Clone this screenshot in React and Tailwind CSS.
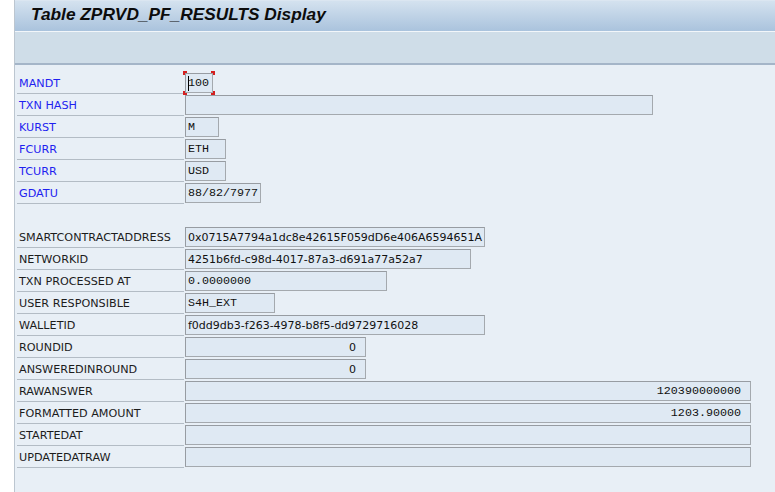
import React from "react";

const mono = { fontFamily: '"Liberation Mono", monospace' };

const rows1 = [
  { label: "MANDT", value: "100", w: 28, mono: true, focus: true },
  { label: "TXN HASH", value: "", w: 468 },
  { label: "KURST", value: "M", w: 34, mono: true },
  { label: "FCURR", value: "ETH", w: 41, mono: true },
  { label: "TCURR", value: "USD", w: 41, mono: true },
  { label: "GDATU", value: "88/82/7977", w: 76, mono: true },
];

const rows2 = [
  { label: "SMARTCONTRACTADDRESS", value: "0x0715A7794a1dc8e42615F059dD6e406A6594651A", w: 300 },
  { label: "NETWORKID", value: "4251b6fd-c98d-4017-87a3-d691a77a52a7", w: 286 },
  { label: "TXN PROCESSED AT", value: "0.0000000", w: 202, mono: true },
  { label: "USER RESPONSIBLE", value: "S4H_EXT", w: 90, mono: true },
  { label: "WALLETID", value: "f0dd9db3-f263-4978-b8f5-dd9729716028", w: 300 },
  { label: "ROUNDID", value: "0", w: 181, right: true },
  { label: "ANSWEREDINROUND", value: "0", w: 181, right: true },
  { label: "RAWANSWER", value: "120390000000", w: 566, mono: true, right: true },
  { label: "FORMATTED AMOUNT", value: "1203.90000", w: 566, mono: true, right: true },
  { label: "STARTEDAT", value: "", w: 566 },
  { label: "UPDATEDATRAW", value: "", w: 566 },
];

function Field({ r }) {
  const widthCls = {
    28: "w-[28px]",
    468: "w-[468px]",
    34: "w-[34px]",
    41: "w-[41px]",
    76: "w-[76px]",
    300: "w-[300px]",
    286: "w-[286px]",
    202: "w-[202px]",
    90: "w-[90px]",
    181: "w-[181px]",
    566: "w-[566px]",
  }[r.w];
  return (
    <div className={`relative ml-[1px] mt-[1px] h-[20px] ${widthCls} shrink-0`}>
      <div
        className={`flex h-full w-full items-center border border-[#a4a9ae] border-t-[#979ca2] border-l-[#979ca2] bg-[#dfe9f3] pt-[1px] text-[#111] ${
          r.right ? "justify-end pr-[9px]" : "pl-[2px]"
        }`}
        style={r.mono ? mono : undefined}
      >
        {r.focus && <span className="mr-[-1px] inline-block h-[15px] w-[1px] bg-black" />}
        <span className={r.mono ? "text-[11.7px] leading-none" : "text-[11px] leading-none"}>{r.value}</span>
      </div>
      {r.focus && (
        <>
          <span className="absolute left-[-2px] top-[-2px] h-[4px] w-[4px] border-l-2 border-t-2 border-[#d42020]" />
          <span className="absolute right-[-2px] top-[-2px] h-[4px] w-[4px] border-r-2 border-t-2 border-[#d42020]" />
          <span className="absolute bottom-[-2px] left-[-2px] h-[4px] w-[4px] border-b-2 border-l-2 border-[#d42020]" />
          <span className="absolute bottom-[-2px] right-[-2px] h-[4px] w-[4px] border-b-2 border-r-2 border-[#d42020]" />
        </>
      )}
    </div>
  );
}

function Row({ r, blue }) {
  return (
    <div className="flex h-[22px] items-start">
      <div
        className={`flex h-[22px] w-[167px] shrink-0 items-center border-b border-[#b3bcc5] pl-[2px] pt-[3px] text-[11.2px] ${
          blue ? "text-[#1f1ff0]" : "text-[#1c1c1c]"
        }`}
      >
        {r.label}
      </div>
      <Field r={r} />
    </div>
  );
}

export default function App() {
  return (
    <div
      className="flex h-[492px] w-[775px] overflow-hidden bg-white"
      style={{ fontFamily: '"DejaVu Sans", sans-serif' }}
    >
      <div className="w-[14px] shrink-0 bg-white" />
      <div className="flex min-w-0 flex-1 flex-col border-l border-[#bcc6d0]">
        <div className="flex h-[31px] items-center border-t border-[#dbe6f1] bg-gradient-to-b from-[#d4e2ef] to-[#aac3dd] pl-[16px] pb-[2px]">
          <span
            className="text-[17.3px] font-bold italic text-[#0c0c0c]"
            style={{ fontFamily: '"Liberation Sans", sans-serif' }}
          >
            Table ZPRVD_PF_RESULTS Display
          </span>
        </div>
        <div className="h-[1px] bg-[#f2f6fa]" />
        <div className="h-[33px] border-b-2 border-[#a4b5c8] bg-[#cfdde8]" />
        <div className="flex-1 bg-[#e8eff6] pl-[2px] pt-[7px]">
          {rows1.map((r) => (
            <Row key={r.label} r={r} blue />
          ))}
          <div className="h-[22px]" />
          {rows2.map((r) => (
            <Row key={r.label} r={r} />
          ))}
        </div>
      </div>
    </div>
  );
}
